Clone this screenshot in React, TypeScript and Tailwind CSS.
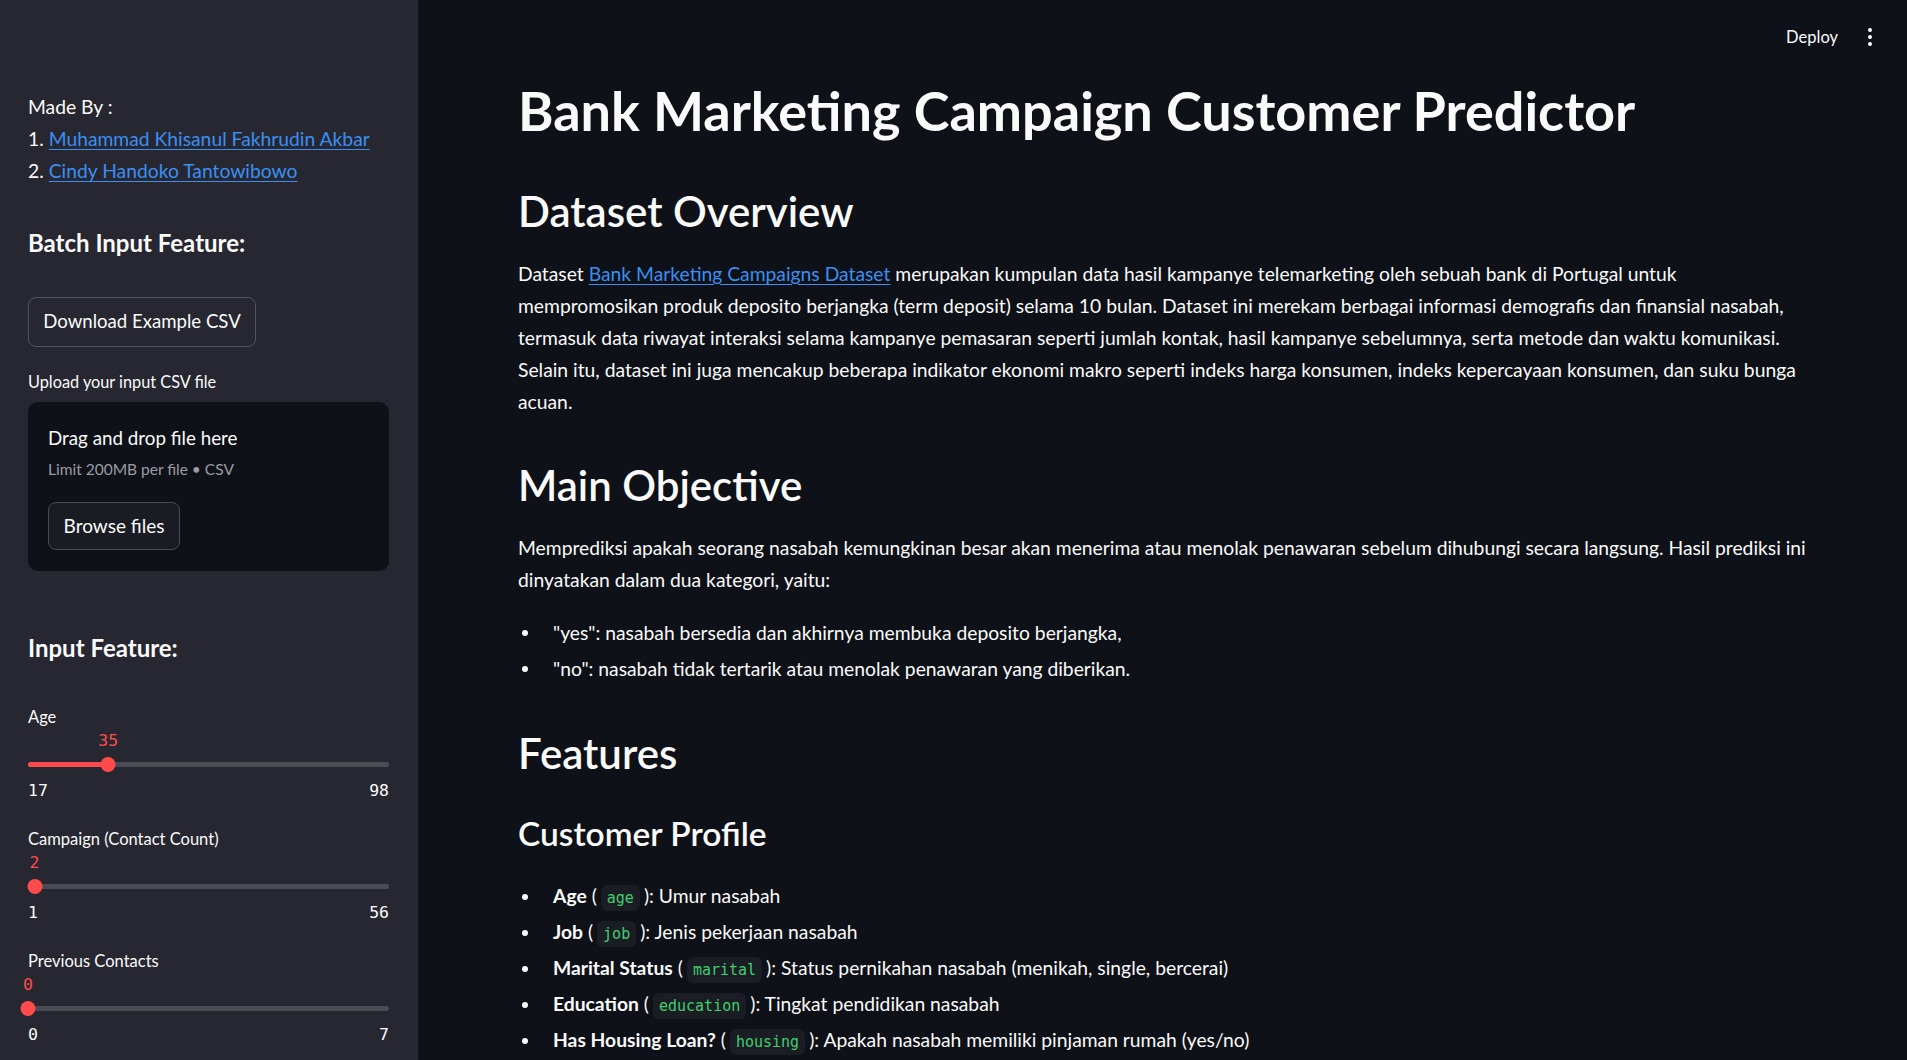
import { ReactNode } from "react";

type SliderProps = {
  label: string;
  value: number;
  min: number;
  max: number;
};

const Slider = ({ label, value, min, max }: SliderProps) => {
  const pct = ((value - min) / (max - min)) * 100;
  return (
    <div className="mb-[20px]">
      <div className="h-[28px] text-[16.5px] leading-[28px]">{label}</div>
      <div className="relative h-[20px]">
        <span
          className="absolute top-0 -translate-x-1/2 font-['DejaVu_Sans_Mono',monospace] text-[16.5px] leading-[20px] text-[#ff4b4b]"
          style={{ left: `${pct}%` }}
        >
          {value}
        </span>
      </div>
      <div className="relative flex h-[26px] items-center">
        <div className="h-[5px] w-full rounded-full bg-[#4a4b53]" />
        <div
          className="absolute left-0 h-[5px] rounded-full bg-[#ff4b4b]"
          style={{ width: `${pct}%` }}
        />
        <div
          className="absolute h-[15px] w-[15px] -translate-x-1/2 rounded-full bg-[#ff4b4b]"
          style={{ left: `${pct}%` }}
        />
      </div>
      <div className="flex h-[28px] items-center justify-between font-['DejaVu_Sans_Mono',monospace] text-[16.5px]">
        <span>{min}</span>
        <span>{max}</span>
      </div>
    </div>
  );
};

const Code = ({ children }: { children: ReactNode }) => (
  <code className="mx-[4px] rounded-[6px] bg-[#1b1d25] px-[6px] py-[4px] font-['DejaVu_Sans_Mono',monospace] text-[15px] text-[#3fcf6c]">
    {children}
  </code>
);

const Bullet = ({ children }: { children: ReactNode }) => (
  <li className="flex h-[32px] items-center leading-[32px]">
    <span className="flex w-[35px] shrink-0 pl-[4px]">
      <span className="h-[6px] w-[6px] rounded-full bg-[#fafafa]" />
    </span>
    <span className="whitespace-nowrap">{children}</span>
  </li>
);

const Link = ({ children }: { children: ReactNode }) => (
  <a href="#" className="text-[#3b8ff2] underline underline-offset-[3px]">
    {children}
  </a>
);

const profile = [
  { name: "Age", code: "age", desc: "Umur nasabah" },
  { name: "Job", code: "job", desc: "Jenis pekerjaan nasabah" },
  { name: "Marital Status", code: "marital", desc: "Status pernikahan nasabah (menikah, single, bercerai)" },
  { name: "Education", code: "education", desc: "Tingkat pendidikan nasabah" },
  { name: "Has Housing Loan?", code: "housing", desc: "Apakah nasabah memiliki pinjaman rumah (yes/no)" },
];

export default function App() {
  return (
    <div className="flex h-[1060px] w-full overflow-hidden bg-[#0e1117] font-['Lato','Noto_Sans',sans-serif] text-[#fafafa]">
      <aside className="w-[418px] shrink-0 bg-[#262730] px-[28px] pt-[91px]">
        <div className="text-[19.3px] leading-[32px]">
          <div>Made By :</div>
          <div>
            1. <Link>Muhammad Khisanul Fakhrudin Akbar</Link>
          </div>
          <div>
            2. <Link>Cindy Handoko Tantowibowo</Link>
          </div>
        </div>

        <h3 className="mt-[41px] text-[24px] font-bold leading-[29px]">Batch Input Feature:</h3>

        <button className="mt-[40px] h-[50px] w-[228px] rounded-[8px] border border-[#52535b] text-[18.6px]">
          Download Example CSV
        </button>

        <div className="mt-[21px] h-[28px] text-[16.3px] leading-[28px]">Upload your input CSV file</div>

        <div className="mt-[6px] h-[169px] w-[361px] rounded-[10px] bg-[#0e1117] px-[20px] pt-[22px]">
          <div className="text-[18.8px] leading-[28px]">Drag and drop file here</div>
          <div className="mt-[5px] text-[15.5px] leading-[24px] text-[#9a9ca4]">Limit 200MB per file • CSV</div>
          <button className="mt-[21px] h-[48px] w-[132px] rounded-[8px] border border-[#4a4b53] bg-[#1a1c23] text-[19px]">
            Browse files
          </button>
        </div>

        <h3 className="mt-[62px] text-[24px] font-bold leading-[29px]">Input Feature:</h3>

        <div className="mt-[41px] w-[361px]">
          <Slider label="Age" value={35} min={17} max={98} />
          <Slider label="Campaign (Contact Count)" value={2} min={1} max={56} />
          <Slider label="Previous Contacts" value={0} min={0} max={7} />
        </div>
      </aside>

      <main className="min-w-0 flex-1 overflow-hidden">
        <header className="flex h-[74px] items-center justify-end gap-[30px] pr-[35px]">
          <span className="text-[16.5px]">Deploy</span>
          <span className="flex flex-col gap-[3px]">
            <span className="h-[4px] w-[4px] rounded-full bg-[#fafafa]" />
            <span className="h-[4px] w-[4px] rounded-full bg-[#fafafa]" />
            <span className="h-[4px] w-[4px] rounded-full bg-[#fafafa]" />
          </span>
        </header>

        <div className="px-[100px] pt-[4px]">
          <h1 className="text-[54px] font-bold leading-[66px]">Bank Marketing Campaign Customer Predictor</h1>

          <h2 className="mt-[40px] text-[42px] font-semibold leading-[54px]">Dataset Overview</h2>
          <p className="mt-[20px] whitespace-nowrap text-[19.3px] leading-[32px]">
            Dataset <Link>Bank Marketing Campaigns Dataset</Link> merupakan kumpulan data hasil kampanye telemarketing oleh sebuah bank di Portugal untuk
            <br />
            mempromosikan produk deposito berjangka (term deposit) selama 10 bulan. Dataset ini merekam berbagai informasi demografis dan finansial nasabah,
            <br />
            termasuk data riwayat interaksi selama kampanye pemasaran seperti jumlah kontak, hasil kampanye sebelumnya, serta metode dan waktu komunikasi.
            <br />
            Selain itu, dataset ini juga mencakup beberapa indikator ekonomi makro seperti indeks harga konsumen, indeks kepercayaan konsumen, dan suku bunga
            <br />
            acuan.
          </p>

          <h2 className="mt-[40px] text-[42px] font-semibold leading-[54px]">Main Objective</h2>
          <p className="mt-[20px] whitespace-nowrap text-[19.3px] leading-[32px]">
            Memprediksi apakah seorang nasabah kemungkinan besar akan menerima atau menolak penawaran sebelum dihubungi secara langsung. Hasil prediksi ini
            <br />
            dinyatakan dalam dua kategori, yaitu:
          </p>
          <ul className="mt-[21px] flex flex-col gap-[4px] text-[19.3px]">
            <Bullet>"yes": nasabah bersedia dan akhirnya membuka deposito berjangka,</Bullet>
            <Bullet>"no": nasabah tidak tertarik atau menolak penawaran yang diberikan.</Bullet>
          </ul>

          <h2 className="mt-[41px] text-[42px] font-semibold leading-[54px]">Features</h2>
          <h3 className="mt-[32px] text-[33.5px] font-semibold leading-[42px]">Customer Profile</h3>
          <ul className="mt-[27px] flex flex-col gap-[4px] text-[19.3px]">
            {profile.map((p) => (
              <Bullet key={p.code}>
                <b>{p.name}</b> (<Code>{p.code}</Code>): {p.desc}
              </Bullet>
            ))}
          </ul>
        </div>
      </main>
    </div>
  );
}
